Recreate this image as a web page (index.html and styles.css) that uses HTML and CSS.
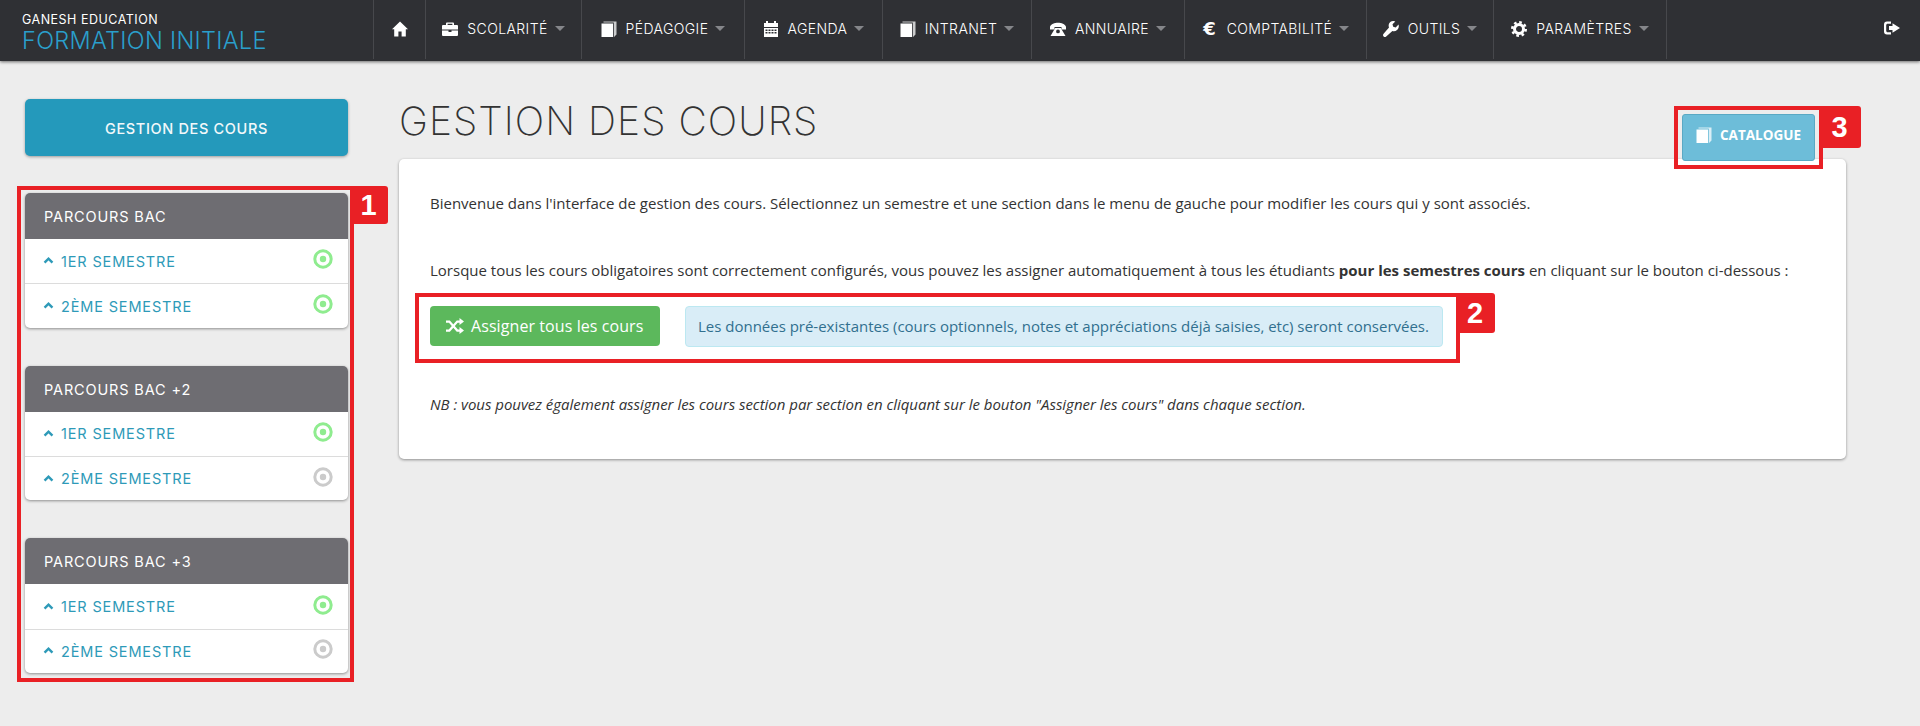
FILE: index.html
```html
<!DOCTYPE html>
<html lang="fr">
<head>
<meta charset="utf-8">
<title>Gestion des cours</title>
<link rel="stylesheet" href="styles.css">
</head>
<body>
<svg class="defs" width="0" height="0" aria-hidden="true">
  <symbol id="i-home" viewBox="0 0 16 16"><path d="M8 .5l8 7.800h-2.200V15.500H9.600v-5H6.400v5H2.200V8.300H0z"/></symbol>
  <symbol id="i-case" viewBox="0 0 16 16"><path d="M5 1.5h6a1 1 0 0 1 1 1V4h3a1 1 0 0 1 1 1v3.6H0V5a1 1 0 0 1 1-1h3V2.500a1 1 0 0 1 1-1zm.6 1.300V4h4.800V2.800zM0 9.600h6.500V11h3V9.600H16V14a1 1 0 0 1-1 1H1a1 1 0 0 1-1-1z"/></symbol>
  <symbol id="i-book" viewBox="0 0 16 16"><path d="M.5 2.500h11.500V16H.5z"/><path d="M2.500 .5H15.500v13l-2.500 2.500h-.2V1.500H2.500z" opacity=".75"/></symbol>
  <symbol id="i-cal" viewBox="0 0 16 16"><path d="M3 0h2v2h6V0h2v2h2v4H1V2h2z"/><path d="M1 7h14v9H1zm1.500 1.500v1.500h2V8.500zm3 0v1.500h2V8.500zm3 0v1.500h2V8.500zm3 0v1.500h2V8.500zm-9 2.500v1.500h2V11zm3 0v1.500h2V11zm3 0v1.500h2V11zm3 0v1.500h2V11z"/></symbol>
  <symbol id="i-phone" viewBox="0 0 16 16"><path d="M0 5.700C2 .5 14 .5 16 5.700V8.500h-4.500V6h-7v2.500H0z"/><path d="M5.200 7h5.600L15.500 15H.5zM8 8.500a1.900 1.900 0 1 0 0 3.800A1.900 1.900 0 0 0 8 8.500z"/></symbol>
  <symbol id="i-wrench" viewBox="0 0 16 16"><path d="M15.500 3.600l-2.800 2.800-2.500-.7-.7-2.500L12.300.4C10.200-.5 7.700.1 6.400 2c-.9 1.300-1 3-.4 4.400L.6 12.700c-.8.900-.8 1.900 0 2.700.7.700 1.800.8 2.600 0l6.200-5.500c1.500.6 3.300.3 4.600-.9 1.700-1.300 2.200-3.500 1.500-5.400z"/></symbol>
  <symbol id="i-cog" viewBox="0 0 16 16"><circle cx="8" cy="8" r="4.500" fill="none" stroke="currentColor" stroke-width="3"/><circle cx="8" cy="8" r="6.700" fill="none" stroke="currentColor" stroke-width="2.600" stroke-dasharray="2.600 2.660"/></symbol>
  <symbol id="i-out" viewBox="0 0 16 16"><path d="M0 4.500A3 3 0 0 1 3 1.500h4v2.200H3.700c-.9 0-1.500.6-1.500 1.500v5.600c0 .9.600 1.500 1.500 1.500H7v2.200H3a3 3 0 0 1-3-3z"/><path d="M8.500 3.300L16 8l-7.500 4.700V10H5V6h3.500z"/></symbol>
  <symbol id="i-shuffle" viewBox="0 0 16 16"><path d="M0 4h3l7 8h2.500" fill="none" stroke="currentColor" stroke-width="2"/><path d="M0 12h3l7-8h2.500" fill="none" stroke="currentColor" stroke-width="2"/><path d="M12 .8L16 4l-4 3.200zM12 8.800l4 3.200-4 3.200z"/></symbol>
  <symbol id="i-chev" viewBox="0 0 12 8"><path d="M1.500 6.500L6 2l4.500 4.500" fill="none" stroke="currentColor" stroke-width="2.800"/></symbol>
  <symbol id="i-target" viewBox="0 0 20 20"><circle cx="10" cy="10" r="8.200" fill="none" stroke="currentColor" stroke-width="3"/><circle cx="10" cy="10" r="3.200"/></symbol>
</svg>

<nav class="topbar">
  <a class="brand">
    <span class="brand-top">GANESH EDUCATION</span>
    <span class="brand-name">FORMATION INITIALE</span>
  </a>
  <ul class="menu">
    <li class="menu-item"><svg class="ico"><use href="#i-home"/></svg></li>
    <li class="menu-item"><svg class="ico"><use href="#i-case"/></svg><span>SCOLARITÉ</span><i class="caret"></i></li>
    <li class="menu-item"><svg class="ico"><use href="#i-book"/></svg><span>PÉDAGOGIE</span><i class="caret"></i></li>
    <li class="menu-item"><svg class="ico"><use href="#i-cal"/></svg><span>AGENDA</span><i class="caret"></i></li>
    <li class="menu-item"><svg class="ico"><use href="#i-book"/></svg><span>INTRANET</span><i class="caret"></i></li>
    <li class="menu-item"><svg class="ico"><use href="#i-phone"/></svg><span>ANNUAIRE</span><i class="caret"></i></li>
    <li class="menu-item"><b class="euro">€</b><span>COMPTABILITÉ</span><i class="caret"></i></li>
    <li class="menu-item"><svg class="ico"><use href="#i-wrench"/></svg><span>OUTILS</span><i class="caret"></i></li>
    <li class="menu-item"><svg class="ico"><use href="#i-cog"/></svg><span>PARAMÈTRES</span><i class="caret"></i></li>
  </ul>
  <a class="logout"><svg class="ico"><use href="#i-out"/></svg></a>
</nav>

<div class="page">
  <aside class="sidebar">
    <a class="side-title">GESTION DES COURS</a>

    <section class="panel">
      <h2 class="panel-head">PARCOURS BAC</h2>
      <a class="panel-row"><svg class="chev"><use href="#i-chev"/></svg><span>1ER SEMESTRE</span><svg class="target on"><use href="#i-target"/></svg></a>
      <a class="panel-row"><svg class="chev"><use href="#i-chev"/></svg><span>2ÈME SEMESTRE</span><svg class="target on"><use href="#i-target"/></svg></a>
    </section>

    <section class="panel">
      <h2 class="panel-head">PARCOURS BAC +2</h2>
      <a class="panel-row"><svg class="chev"><use href="#i-chev"/></svg><span>1ER SEMESTRE</span><svg class="target on"><use href="#i-target"/></svg></a>
      <a class="panel-row"><svg class="chev"><use href="#i-chev"/></svg><span>2ÈME SEMESTRE</span><svg class="target off"><use href="#i-target"/></svg></a>
    </section>

    <section class="panel">
      <h2 class="panel-head">PARCOURS BAC +3</h2>
      <a class="panel-row"><svg class="chev"><use href="#i-chev"/></svg><span>1ER SEMESTRE</span><svg class="target on"><use href="#i-target"/></svg></a>
      <a class="panel-row"><svg class="chev"><use href="#i-chev"/></svg><span>2ÈME SEMESTRE</span><svg class="target off"><use href="#i-target"/></svg></a>
    </section>
  </aside>

  <main class="content">
    <header class="content-head">
      <h1 class="title">GESTION DES COURS</h1>
      <a class="catalogue"><svg class="ico"><use href="#i-book"/></svg>CATALOGUE</a>
    </header>
    <div class="card">
      <p class="intro">Bienvenue dans l'interface de gestion des cours. Sélectionnez un semestre et une section dans le menu de gauche pour modifier les cours qui y sont associés.</p>
      <p class="lead">Lorsque tous les cours obligatoires sont correctement configurés, vous pouvez les assigner automatiquement à tous les étudiants <strong>pour les semestres cours</strong> en cliquant sur le bouton ci-dessous :</p>
      <div class="assign">
        <a class="btn-assign"><svg class="ico ico-lg"><use href="#i-shuffle"/></svg>Assigner tous les cours</a>
        <div class="notice">Les données pré-existantes (cours optionnels, notes et appréciations déjà saisies, etc) seront conservées.</div>
      </div>
      <p class="note">NB : vous pouvez également assigner les cours section par section en cliquant sur le bouton "Assigner les cours" dans chaque section.</p>
    </div>
  </main>
</div>

<div class="callout callout-1"><span class="tag">1</span></div>
<div class="callout callout-2"><span class="tag">2</span></div>
<div class="callout callout-3"><span class="tag">3</span></div>
</body>
</html>
```

FILE: styles.css
```css
* { box-sizing: border-box; }
html, body { margin: 0; padding: 0; }
body {
  position: relative;
  min-height: 726px;
  overflow: hidden;
  background: #ededed;
  color: #333;
  font-family: "Open Sans", sans-serif;
  font-size: 15px;
  line-height: 20px;
}
.defs { position: absolute; }
.ico { width: 16px; height: 16px; fill: currentColor; flex: none; }
.ico-lg { width: 18px; height: 18px; }

.topbar {
  display: flex;
  height: 61px;
  padding-bottom: 2px;
  background: #2f3034;
  color: #fff;
  box-shadow: 0 1px 3px rgba(0, 0, 0, .55);
  font-family: Inter, sans-serif;
}
.brand {
  flex: 0 0 373px;
  display: flex;
  flex-direction: column;
  padding: 12px 0 0 22px;
}
.brand-top { font-size: 12.5px; line-height: 15px; letter-spacing: .5px; }
.brand-name { font-size: 23.5px; line-height: 28px; font-weight: 300; color: #2a9fcb; letter-spacing: .3px; }
.menu {
  display: grid;
  grid-template-columns: 52px 156px 163px 138px 149px 153px 182px 127px 174px;
  margin: 0;
  padding: 0;
  list-style: none;
}
.menu-item {
  display: flex;
  align-items: center;
  justify-content: center;
  gap: 9px;
  padding-bottom: 2px;
  border-left: 1px solid #47484c;
  font-size: 14px;
  font-weight: 300;
  letter-spacing: .4px;
}
.menu-item:last-child { border-right: 1px solid #47484c; }
.euro { width: 16px; font: 700 18px/1 "DejaVu Sans", sans-serif; text-align: center; }
.caret {
  width: 0;
  height: 0;
  margin-left: -2px;
  border: 5px solid transparent;
  border-top-color: #85868a;
  border-bottom: 0;
}
.logout { margin-left: auto; padding: 20px 20px 0 0; }

.page { display: flex; align-items: flex-start; }
.sidebar { flex: 0 0 323px; margin: 38px 51px 0 25px; font-family: Inter, sans-serif; }
.side-title {
  display: flex;
  align-items: center;
  justify-content: center;
  height: 57px;
  margin-bottom: 37px;
  padding-top: 2px;
  border-radius: 5px;
  background: #2499bb;
  color: #f2f8fa;
  font-size: 14.5px;
  font-weight: 500;
  letter-spacing: .65px;
  box-shadow: 0 1px 3px rgba(0, 0, 0, .35);
}
.panel {
  margin-bottom: 38px;
  border-radius: 5px;
  background: #fff;
  box-shadow: 0 1px 3px rgba(0, 0, 0, .4);
  overflow: hidden;
}
.panel-head {
  height: 46px;
  margin: 0;
  padding: 0 19px;
  background: #6e6d72;
  color: #fff;
  font-size: 14.5px;
  font-weight: 400;
  letter-spacing: .85px;
  line-height: 48px;
}
.panel-row {
  display: flex;
  align-items: center;
  height: 44.35px;
  padding: 1px 15px 0 18px;
  color: #2e9ab8;
  font-size: 14.5px;
  letter-spacing: .85px;
}
.panel-row + .panel-row { border-top: 1px solid #dcdcdc; }
.chev { flex: none; width: 11px; height: 7px; margin: -2px 7px 0 0; }
.target { flex: none; width: 20px; height: 20px; margin: -5px 0 0 auto; fill: currentColor; }
.target.on { color: #8fec8f; }
.target.off { color: #cbcbcb; }

.content { flex: 0 0 1447px; }
.content-head { display: flex; justify-content: space-between; align-items: flex-start; height: 98px; padding: 38px 31px 0 0; }
.title { margin: 0; font: 200 39px/44px Inter, sans-serif; color: #333; letter-spacing: 1.05px; }
.catalogue {
  position: relative;
  z-index: 1;
  display: flex;
  align-items: center;
  gap: 8px;
  width: 133px;
  height: 47px;
  margin-top: 15px;
  padding: 0 0 5px 13px;
  border: 1px solid #5aa9c4;
  border-radius: 3px;
  background: #6dbdd9;
  color: #fff;
  font-size: 13.5px;
  font-weight: 700;
  white-space: nowrap;
}
.card {
  height: 300px;
  padding: 34px 31px 0;
  border-radius: 5px;
  background: #fff;
  box-shadow: 0 1px 3px rgba(0, 0, 0, .4);
}
.card p { margin: 0; }
.card .lead { margin-top: 47px; }
.card .note { margin-top: 47px; font-style: italic; letter-spacing: -.02px; }
.assign { display: flex; align-items: flex-start; gap: 25px; margin-top: 26px; }
.btn-assign {
  display: flex;
  align-items: center;
  gap: 7px;
  width: 230px;
  height: 40px;
  padding: 0 0 0 16px;
  border-radius: 4px;
  background: #5cb85c;
  color: #fff;
  font-size: 16px;
  letter-spacing: .08px;
  white-space: nowrap;
}
.notice {
  height: 41px;
  padding: 0 13px 0 12px;
  border: 1px solid #bce8f1;
  border-radius: 4px;
  background: #d9edf7;
  color: #31708f;
  line-height: 39px;
  letter-spacing: -.01px;
  white-space: nowrap;
}

.callout { position: absolute; z-index: 2; border: 4px solid #e92025; pointer-events: none; }
.callout-1 { left: 17px; top: 186px; width: 337px; height: 496px; }
.callout-2 { left: 415px; top: 293px; width: 1045px; height: 70px; }
.callout-3 { left: 1674px; top: 106px; width: 149px; height: 63px; }
.tag {
  position: absolute;
  top: -4px;
  left: calc(100% + 4px);
  width: 34px;
  height: 38px;
  padding-right: 5px;
  border-radius: 0 3px 3px 0;
  background: #e92025;
  color: #fff;
  font: 700 29px/38px "Liberation Sans", sans-serif;
  text-align: center;
}
.callout-2 .tag { width: 35px; height: 40px; line-height: 40px; }
.callout-3 .tag { width: 38px; height: 42px; line-height: 42px; }
```
